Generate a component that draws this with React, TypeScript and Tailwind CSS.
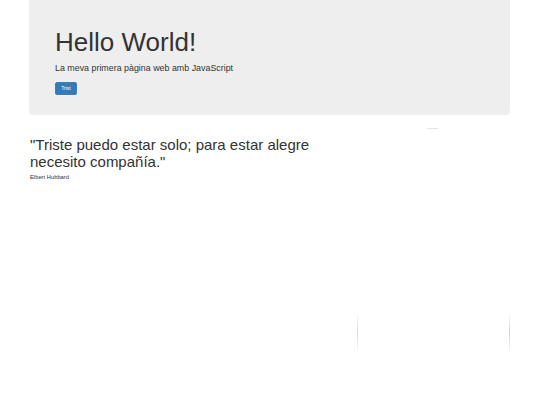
export default function App() {
  return (
    <div className="w-[540px] h-[405px] bg-white text-[#333]" style={{ fontFamily: '"Liberation Sans", Arial, sans-serif' }}>
      <div className="mx-[29px] w-[481px]">
        <div className="bg-[#eeeeee] rounded-b-[4px] pl-[26px] pt-[28px] pb-[20px] h-[115px]">
          <h1 className="text-[26px] leading-[28.6px] font-normal">Hello World!</h1>
          <p className="mt-[5px] text-[8.9px] leading-[13px]">La meva primera pàgina web amb JavaScript</p>
          <button className="mt-[7px] h-[13px] w-[22px] rounded-[2px] bg-[#337ab7] border border-[#3b7fbb] text-white text-[5px] leading-[11px] flex items-center justify-center">
            Trist
          </button>
        </div>
        <div className="flex">
          <div className="w-[320px] pl-[1px]">
            <p className="mt-[21px] text-[15px] leading-[17px]">"Triste puedo estar solo; para estar alegre necesito compañía."</p>
            <p className="mt-[3px] text-[5.8px] leading-[8px]">Elbert Hubbard</p>
          </div>
          <div className="ml-auto w-[153px] flex flex-col">
            <div className="mt-[13px] ml-[70px] h-px w-[11px] bg-[#e4e4e4]" />
            <div className="mt-[183px] h-[42px] flex justify-between">
              <div className="w-px h-full bg-gradient-to-b from-transparent via-[#d8d8d8] to-transparent" />
              <div className="w-px h-full bg-gradient-to-b from-transparent via-[#d0d0d0] to-transparent" />
            </div>
          </div>
        </div>
      </div>
    </div>
  );
}
